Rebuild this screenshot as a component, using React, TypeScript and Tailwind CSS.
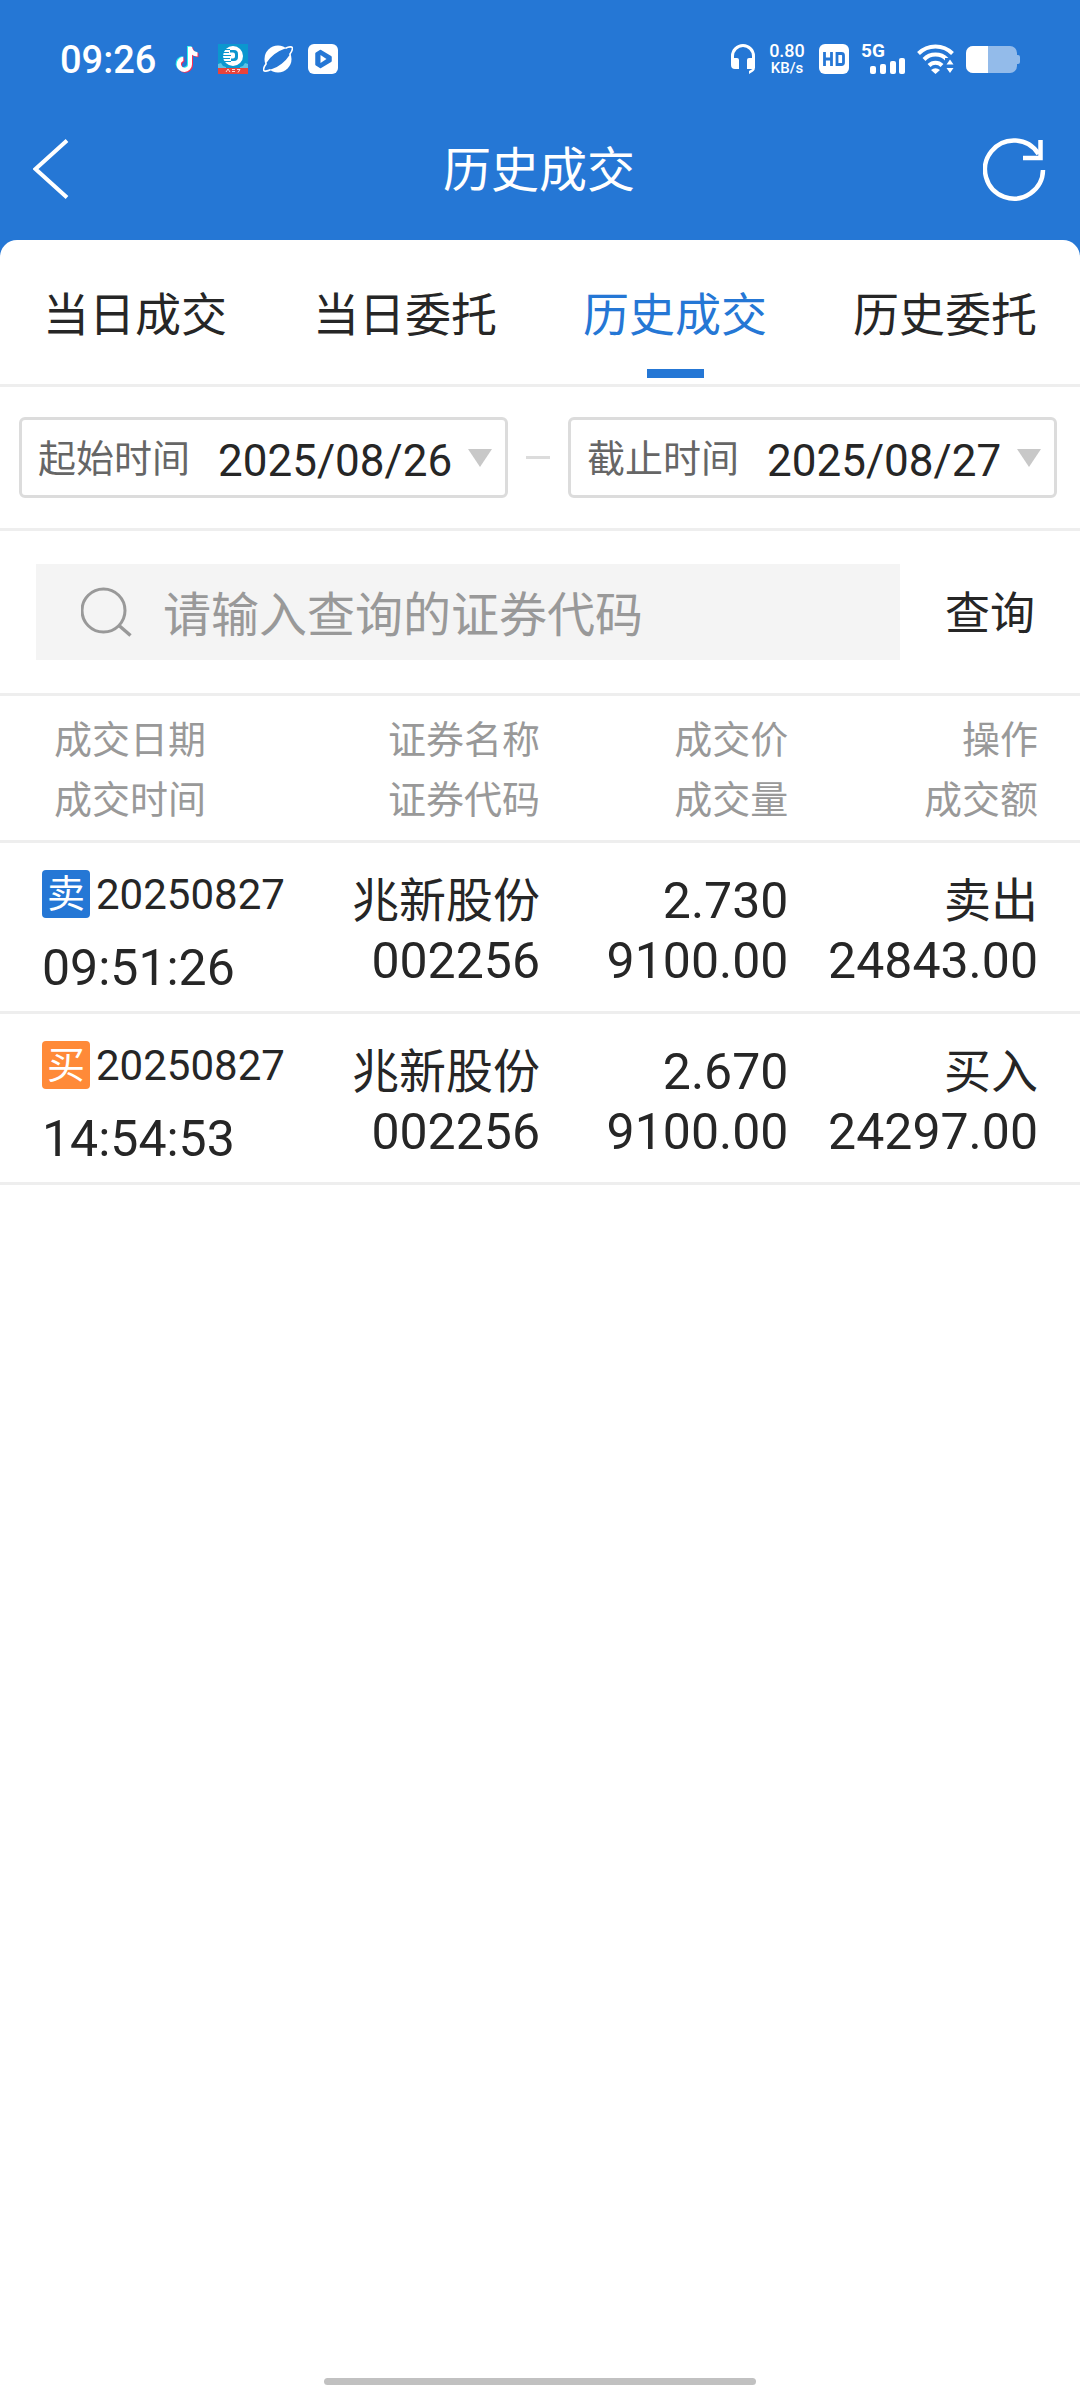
import { useState } from "react";

const FONT = "font-['Roboto','Noto_Sans_CJK_SC',sans-serif]";

const TABS = ["当日成交", "当日委托", "历史成交", "历史委托"];

type Trade = {
  side: "卖" | "买";
  date: string;
  time: string;
  name: string;
  code: string;
  price: string;
  volume: string;
  action: string;
  amount: string;
};

const TRADES: Trade[] = [
  { side: "卖", date: "20250827", time: "09:51:26", name: "兆新股份", code: "002256", price: "2.730", volume: "9100.00", action: "卖出", amount: "24843.00" },
  { side: "买", date: "20250827", time: "14:54:53", name: "兆新股份", code: "002256", price: "2.670", volume: "9100.00", action: "买入", amount: "24297.00" },
];

function MusicNote() {
  const d = "M13 1h4c.3 3 2.300 5.200 5.500 5.500v4.200c-2 0-4-.6-5.500-1.700v9.500a7.700 7.700 0 1 1-8.700-7.600v4.300a3.500 3.500 0 1 0 4.700 3.300z";
  return (
    <svg viewBox="0 0 25 28" className="h-7 w-[25px]" aria-hidden="true">
      <path d={d} fill="#25f4ee" />
      <path d={d} fill="#fe2c55" transform="translate(2 1.500)" />
      <path d={d} fill="#fff" transform="translate(1 .7)" />
    </svg>
  );
}

function BrokerIcon() {
  return (
    <svg viewBox="0 0 30 30" className="size-[30px]" aria-hidden="true">
      <rect width="30" height="30" fill="#0b97cf" />
      <rect y="24" width="30" height="6" fill="#e8433c" />
      <path d="M0 20l3-1 2 3 3 1v1H0zM30 20l-3-1-2 3-3 1v1h8z" fill="#5cc3e6" />
      <circle cx="15" cy="12" r="10" fill="#fff" />
      <path d="M12 6h4q4 0 4 4v3q0 4-4 4h-3v-2.500h2q2 0 2-2v-2q0-2-2-2h-3z" fill="#0b97cf" />
      <path d="M4 5.500h8M4 8.500h7M4 11.500h9M4 14.500h8M5 17.500h8" stroke="#0b97cf" strokeWidth="1" />
      <path d="M8 28l2-3 2 3M14 25.500h3M14 27.500h3M19 25.500h3l-2 3" stroke="#fff" strokeWidth=".8" fill="none" />
    </svg>
  );
}

function PlanetIcon() {
  return (
    <svg viewBox="0 0 30 28" className="h-7 w-[30px]" aria-hidden="true">
      <circle cx="15" cy="14" r="13.500" fill="#fff" />
      <ellipse cx="15" cy="14" rx="15.500" ry="6" transform="rotate(-38 15 14)" fill="#2577d5" />
      <path d="M22.500 3.200C26 1.600 29 1.500 29.300 2.800c.5 1.800-1 4.600-2.800 7M7.500 24.800c-3.500 1.600-6.500 1.700-6.800.4-.5-1.800 1-4.600 2.800-7" fill="none" stroke="#fff" strokeWidth="1.600" />
    </svg>
  );
}

function PlayIcon() {
  return (
    <svg viewBox="0 0 30 30" className="size-[30px]" aria-hidden="true">
      <rect width="30" height="30" rx="6" fill="#fff" />
      <path d="M8.500 9.500L12.500 7 22.500 13v4L12.500 23 8.500 20.500z" fill="#2577d5" stroke="#2577d5" strokeWidth="2.500" strokeLinejoin="round" />
      <path d="M12.500 11v8l6-4z" fill="#fff" />
    </svg>
  );
}

function HeadphonesIcon() {
  return (
    <svg viewBox="0 0 24 30" className="h-[30px] w-6" aria-hidden="true">
      <path d="M1.500 17v-5a10.500 10.500 0 0 1 21 0v12" fill="none" stroke="#fff" strokeWidth="3" />
      <path d="M0 14h6a2 2 0 0 1 2 2v9H4a4 4 0 0 1-4-4zM24 14h-6a2 2 0 0 0-2 2v9h5.500l-3.500 2v3l4-2.500q2-1.300 2-4z" fill="#fff" />
    </svg>
  );
}

function HdIcon() {
  return (
    <svg viewBox="0 0 30 30" className="size-[30px]" aria-hidden="true">
      <rect width="30" height="30" rx="6" fill="#fff" />
      <path d="M5.500 8v14M12.500 8v14M5.500 15h7M18 9.500h4.500q2 0 2 2v7q0 2-2 2H18z" fill="none" stroke="#2577d5" strokeWidth="2.800" />
    </svg>
  );
}

function SignalIcon() {
  return (
    <span className="flex h-[30px] w-[44px] flex-col">
      <span className="h-[14px] text-[19px] leading-[14px] font-bold">5G</span>
      <svg viewBox="0 0 44 16" className="h-4 w-[44px]" aria-hidden="true">
        <g fill="#fff">
          <rect x="9" y="8" width="6" height="8" rx="2" />
          <rect x="19" y="6" width="6" height="10" rx="2" />
          <rect x="29" y="3" width="6" height="13" rx="2" />
          <rect x="38" y="0" width="6" height="16" rx="2" />
        </g>
      </svg>
    </span>
  );
}

function WifiIcon() {
  return (
    <svg viewBox="0 0 37 30" className="h-[30px] w-[37px]" aria-hidden="true">
      <g fill="none" stroke="#fff" strokeWidth="4">
        <path d="M1.500 9.500a24 24 0 0 1 34 0" />
        <path d="M7 15.500a16 16 0 0 1 23 0" />
        <path d="M12 21.500a9 9 0 0 1 13 0" />
      </g>
      <path d="M14 26q4.500-3.500 9 0l-4.500 4z" fill="#fff" />
      <path d="M28 14h9v16h-9z" fill="#2577d5" />
      <path d="M29.500 20.500l3.500-5 3.500 5zM29.500 24h7l-3.500 5z" fill="#fff" />
    </svg>
  );
}

function BatteryIcon() {
  return (
    <svg viewBox="0 0 54 27" className="h-[27px] w-[54px]" aria-hidden="true">
      <path d="M7 0h37a7 7 0 0 1 7 7v2h1a2 2 0 0 1 2 2v5a2 2 0 0 1-2 2h-1v2a7 7 0 0 1-7 7H7a7 7 0 0 1-7-7V7a7 7 0 0 1 7-7z" fill="#93bbea" />
      <path d="M7 0h15v27H7a7 7 0 0 1-7-7V7a7 7 0 0 1 7-7z" fill="#fff" />
    </svg>
  );
}

function StatusBar() {
  return (
    <div className="flex h-[98px] items-center justify-between px-[60px] pt-5">
      <div className="flex items-center gap-[18px]">
        <span className="pt-0.5 text-[38px] leading-10 font-medium">09:26</span>
        <div className="flex items-center gap-[15px]">
          <MusicNote />
          <span className="pl-1"><BrokerIcon /></span>
          <PlanetIcon />
          <PlayIcon />
        </div>
      </div>
      <div className="flex items-center gap-3">
        <HeadphonesIcon />
        <span className="flex w-10 flex-col items-center">
          <span className="text-[18px] leading-[18px] font-medium">0.80</span>
          <span className="text-[15px] leading-4 font-medium">KB/s</span>
        </span>
        <HdIcon />
        <SignalIcon />
        <WifiIcon />
        <BatteryIcon />
      </div>
    </div>
  );
}

function DateField({ id, label, value }: { id: string; label: string; value: string }) {
  return (
    <div className="flex h-[81px] min-w-0 flex-1 items-center rounded-md border-3 border-[#dcdcdc] pl-4">
      <label htmlFor={id} className="shrink-0 pt-1 text-[38px] text-[#666]">{label}</label>
      <button id={id} type="button" className="flex min-w-0 flex-1 items-center gap-4 pl-7 text-[44px] whitespace-nowrap">
        <span className="pt-1.5">{value}</span>
        <svg viewBox="0 0 24 18" className="h-[18px] w-6 shrink-0" aria-hidden="true">
          <path d="M0 0h24L12 18z" fill="#c8c8c8" />
        </svg>
      </button>
    </div>
  );
}

function TradeRow({ t }: { t: Trade }) {
  return (
    <tr className="h-[171px] border-b-3 border-[#eee] align-top text-[50px] leading-[60px]">
      <td className="pt-[27px] pl-[42px]">
        <div className="flex h-12 items-center gap-1.5 text-[42px]">
          <span className={`flex size-12 items-center justify-center rounded-sm text-[38px] text-white ${t.side === "卖" ? "bg-[#2577d5]" : "bg-[#ff8a38]"}`}>{t.side}</span>
          <span className="pt-0.5">{t.date}</span>
        </div>
        <div className="pt-5">{t.time}</div>
      </td>
      <td className="pt-7 text-right">
        <div className="text-[47px]">{t.name}</div>
        <div>{t.code}</div>
      </td>
      <td className="pt-7 text-right">
        <div>{t.price}</div>
        <div>{t.volume}</div>
      </td>
      <td className="pt-7 pr-[42px] text-right">
        <div className="text-[47px]">{t.action}</div>
        <div>{t.amount}</div>
      </td>
    </tr>
  );
}

export default function App() {
  const [tab, setTab] = useState(2);
  return (
    <div className={`flex min-h-screen flex-col bg-white text-[#262626] ${FONT}`}>
      <div className="bg-[#2577d5]">
        <header className="text-white">
          <StatusBar />
          <div className="flex h-[142px] items-center justify-between px-[33px]">
            <button type="button" aria-label="返回" className="flex w-[62px]">
              <svg viewBox="0 0 36 60" className="h-[60px] w-9" aria-hidden="true">
                <path d="M34 1.500L2.500 30 34 58.500" fill="none" stroke="#fff" strokeWidth="4" />
              </svg>
            </button>
            <h1 className="pt-1 text-[48px] leading-[60px]">历史成交</h1>
            <button type="button" aria-label="刷新">
              <svg viewBox="0 0 64 64" className="size-16" aria-hidden="true">
                <path d="M60 33a29 29 0 1 1-4.500-16" fill="none" stroke="#fff" strokeWidth="4.500" />
                <path d="M57.500 3v18H40" fill="none" stroke="#fff" strokeWidth="4.500" />
              </svg>
            </button>
          </div>
        </header>
        <nav className="grid h-[147px] grid-cols-4 rounded-t-[17px] border-b-3 border-[#eee] bg-white" role="tablist">
          {TABS.map((label, i) => (
            <button
              key={label}
              type="button"
              role="tab"
              aria-selected={i === tab}
              onClick={() => setTab(i)}
              className={`flex flex-col items-center justify-between pt-[45px] pb-1.5 text-[46px] leading-[60px] ${i === tab ? "text-[#2577d5]" : ""}`}
            >
              {label}
              <span className={`h-[9px] w-[57px] ${i === tab ? "bg-[#2577d5]" : ""}`} />
            </button>
          ))}
        </nav>
      </div>

      <div className="flex h-36 items-center gap-[18px] border-b-3 border-[#eee] pr-[23px] pl-[19px]">
        <DateField id="start" label="起始时间" value="2025/08/26" />
        <span className="h-[3px] w-6 bg-[#dcdcdc]" />
        <DateField id="end" label="截止时间" value="2025/08/27" />
      </div>

      <form className="flex h-[165px] items-center border-b-3 border-[#eee] pl-9" onSubmit={(e) => e.preventDefault()}>
        <label className="flex h-24 min-w-0 flex-1 items-center gap-[30px] bg-[#f4f4f4] pl-[45px]">
          <svg viewBox="0 0 52 50" className="h-[50px] w-[52px] shrink-0" aria-hidden="true">
            <circle cx="22.500" cy="23.500" r="21.500" fill="none" stroke="#999" strokeWidth="3" />
            <path d="M38 38.500L49.500 48.500" stroke="#999" strokeWidth="3.500" />
          </svg>
          <input aria-label="证券代码" placeholder="请输入查询的证券代码" className="h-full min-w-0 flex-1 bg-transparent pt-1.5 text-[48px] outline-none placeholder:text-[#999]" />
        </label>
        <button type="submit" className="w-[180px] pt-1.5 text-[45px]">查询</button>
      </form>

      <table className="w-full table-fixed border-collapse">
        <colgroup>
          <col className="w-[27%]" />
          <col className="w-[23%]" />
          <col className="w-[23%]" />
          <col className="w-[27%]" />
        </colgroup>
        <thead>
          <tr className="h-[145px] border-b-3 border-[#eee] text-right align-middle text-[38px] leading-[60px] text-[#999]">
            <th scope="col" className="pt-1 pl-[54px] text-left font-normal">成交日期<br />成交时间</th>
            <th scope="col" className="pt-1 font-normal">证券名称<br />证券代码</th>
            <th scope="col" className="pt-1 font-normal">成交价<br />成交量</th>
            <th scope="col" className="pt-1 pr-[42px] font-normal">操作<br />成交额</th>
          </tr>
        </thead>
        <tbody>
          {TRADES.map((t) => (
            <TradeRow key={t.time} t={t} />
          ))}
        </tbody>
      </table>

      <div className="mx-auto mt-auto mb-[3px] h-[7px] w-2/5 rounded-full bg-[#c1c1c1]" />
    </div>
  );
}
